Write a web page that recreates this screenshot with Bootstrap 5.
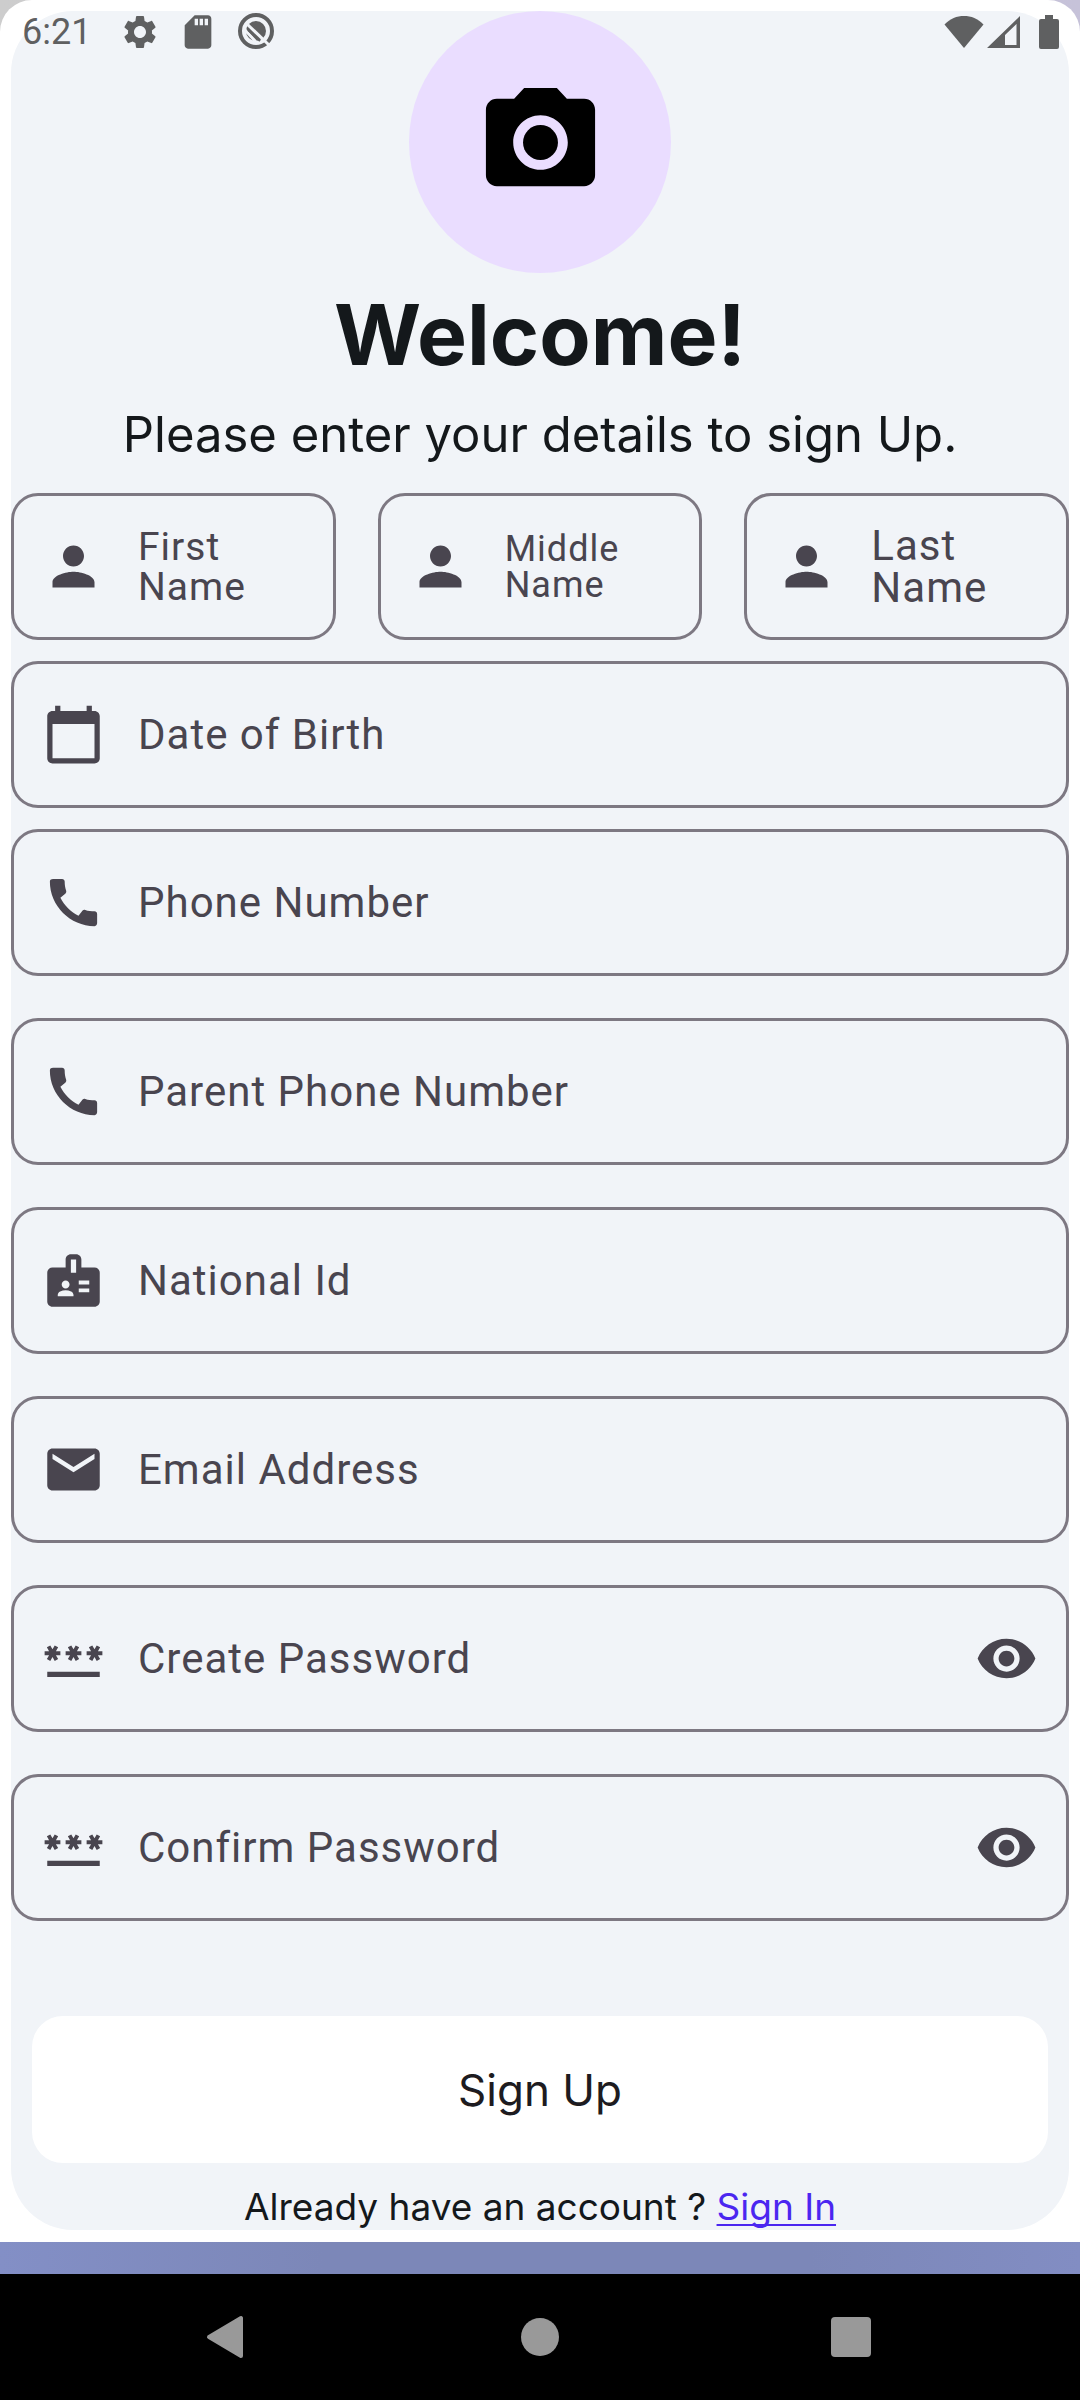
<!DOCTYPE html>
<html lang="en">
<head>
<meta charset="utf-8">
<meta name="viewport" content="width=device-width, initial-scale=1">
<title>Sign Up</title>
<link href="https://cdn.jsdelivr.net/npm/bootstrap@5.3.0/dist/css/bootstrap.min.css" rel="stylesheet">
<style>
  :root { --ink: #14181b; --muted: #49454f; --outline: #7d7882; --panel: #f1f4f8; }
  body { background: linear-gradient(90deg, #cdcdcd, #c6c2d9); color: var(--ink); font-family: Inter, "Liberation Sans", sans-serif; }
  svg { display: block; fill: currentColor; flex: none; }

  .status-strip { height: 64px; padding: 0 21px 0 22px; color: #5f6061; font: 36px/42px Roboto, sans-serif; pointer-events: none; }
  .status-left { gap: 18px; }
  .status-left time { margin-right: 11px; }
  .signal { margin-left: 3px; }
  .battery { margin-left: 19px; }

  .sheet { background: #fff; padding: 11px; border-radius: 32px 32px 0 0; }
  .panel { background: var(--panel); border-radius: 62px; }
  .avatar { width: 262px; height: 262px; background: #eaddff; color: #000; }
  .title { margin: 8px 0 14px; font-size: 84px; line-height: 108px; font-weight: 700; }
  .subtitle { margin: 0 0 26px; font-size: 49px; line-height: 64px; }

  .stack { gap: 42px; }
  .stack-tight { gap: 21px; }
  .name-row { gap: 42px; }
  .field { height: 147px; border: 3px solid var(--outline); border-radius: 27px; padding: 0 28px; gap: 33px; color: var(--muted); font-family: Roboto, sans-serif; }
  .field:focus-within { border-color: #4b39ef; }
  .slot { display: grid; align-items: center; height: 100%; }
  .slot > * { grid-area: 1 / 1; min-width: 0; }
  .slot input { height: 100%; width: 100%; border: 0; outline: 0; background: transparent; color: inherit; font-size: 42px; }
  .slot label { pointer-events: none; font-size: 42px; line-height: 42px; letter-spacing: 1px; }
  .slot label.fit-md { font-size: 39px; line-height: 40px; }
  .slot label.fit-sm { font-size: 36px; line-height: 36px; }
  .slot input:not(:placeholder-shown) + label { opacity: 0; }

  .submit { margin: 95px 21px 21px; height: 147px; border: 0; border-radius: 31px; background: #fff; color: #1d1b20; font-size: 44px; }
  .switch-line { font-size: 37px; line-height: 46px; }
  .switch-line a { color: #4b26f0; text-decoration-skip-ink: none; text-decoration-thickness: 2px; text-underline-offset: 4px; }

  .backdrop { height: 32px; background: linear-gradient(90deg, #838fc6, #7c87b8 30%, #7c87b8 75%, #828dc3); }
  .system-nav { background: #000; gap: 256px; height: 126px; }
  .system-nav button { color: #999; }
</style>
</head>
<body>
<svg class="d-none" aria-hidden="true">
  <symbol id="person" viewBox="0 0 24 24"><path d="M12 12c2.21 0 4-1.79 4-4s-1.79-4-4-4-4 1.79-4 4 1.790 4 4 4zm0 2c-2.670 0-8 1.340-8 4v2h16v-2c0-2.660-5.330-4-8-4z"/></symbol>
  <symbol id="phone" viewBox="0 0 24 24"><path d="M20.010 15.380c-1.230 0-2.420-.2-3.530-.56-.35-.12-.74-.03-1.010.24l-1.570 1.970c-2.830-1.350-5.480-3.900-6.890-6.830l1.950-1.660c.27-.28.35-.67.24-1.020-.37-1.110-.56-2.300-.56-3.530 0-.54-.45-.99-.99-.99H4.190C3.650 3 3 3.240 3 3.990 3 13.280 10.730 21 20.010 21c.71 0 .99-.63.99-1.180v-3.450c0-.54-.45-.99-.99-.99z"/></symbol>
  <symbol id="password" viewBox="0 0 24 24"><path d="M2 17h20v2H2v-2zm1.150-4.050L4 11.470l.85 1.480 1.300-.75-.85-1.480H7v-1.500H5.300l.85-1.470L4.850 7 4 8.470 3.150 7l-1.300.75.85 1.470H1v1.500h1.700l-.85 1.480 1.300.75zm6.700-.75l1.300.75.85-1.480.85 1.480 1.300-.75-.85-1.480H15v-1.500h-1.700l.85-1.470-1.300-.75L12 8.470 11.150 7l-1.300.75.85 1.470H9v1.500h1.700l-.85 1.480zM23 9.220h-1.700l.85-1.470-1.300-.75L20 8.470 19.150 7l-1.300.75.85 1.470H17v1.500h1.700l-.85 1.480 1.300.75.850-1.480.85 1.480 1.300-.75-.85-1.480H23v-1.500z"/></symbol>
  <symbol id="eye" viewBox="0 0 24 24"><path d="M12 4.500C7 4.500 2.730 7.610 1 12c1.730 4.390 6 7.500 11 7.500s9.270-3.110 11-7.500c-1.730-4.390-6-7.500-11-7.500zM12 17c-2.760 0-5-2.240-5-5s2.240-5 5-5 5 2.240 5 5-2.240 5-5 5zm0-8c-1.660 0-3 1.340-3 3s1.340 3 3 3 3-1.340 3-3-1.340-3-3-3z"/></symbol>
</svg>

<div class="position-relative d-flex flex-column min-vh-100">
  <header class="status-strip position-absolute top-0 start-0 end-0 z-1 d-flex align-items-center justify-content-between">
    <div class="status-left d-flex align-items-center">
      <time>6:21</time>
      <svg width="40" height="40" viewBox="0 0 24 24"><path d="M19.140 12.940c.04-.3.060-.61.060-.94 0-.32-.02-.64-.07-.94l2.030-1.580c.18-.14.23-.41.120-.61l-1.920-3.320c-.12-.22-.37-.29-.59-.22l-2.390.96c-.5-.38-1.030-.7-1.620-.94l-.36-2.540c-.04-.24-.24-.41-.48-.41h-3.840c-.24 0-.43.17-.47.41l-.36 2.540c-.59.24-1.130.57-1.620.94l-2.390-.96c-.22-.08-.47 0-.59.22L2.740 8.870c-.12.21-.08.47.12.61l2.030 1.580c-.05.3-.09.63-.09.94s.02.64.070.94l-2.030 1.580c-.18.14-.23.41-.12.61l1.920 3.320c.12.22.37.29.59.22l2.390-.96c.5.38 1.030.7 1.620.94l.36 2.540c.05.24.24.41.48.41h3.840c.24 0 .44-.17.47-.41l.36-2.540c.59-.24 1.130-.56 1.620-.94l2.390.96c.22.08.47 0 .59-.22l1.920-3.320c.12-.22.070-.47-.12-.61l-2.010-1.580zM12 15.600c-1.980 0-3.600-1.620-3.600-3.600s1.620-3.600 3.600-3.600 3.600 1.620 3.600 3.600-1.620 3.600-3.600 3.600z"/></svg>
      <svg width="40" height="40" viewBox="0 0 24 24"><path d="M18 2h-8L4.020 8 4 20c0 1.100.9 2 2 2h12c1.100 0 2-.9 2-2V4c0-1.100-.9-2-2-2zm-6 6h-2V4h2v4zm3 0h-2V4h2v4zm3 0h-2V4h2v4z"/></svg>
      <svg width="40" height="40" viewBox="0 0 40 40"><circle cx="20" cy="19" r="16" fill="none" stroke="currentColor" stroke-width="4"/><circle cx="20" cy="19" r="10"/><path d="M11 12 L33 33" stroke="#f1f4f8" stroke-width="3" fill="none"/><path d="M9 18 L20 30" stroke="#f1f4f8" stroke-width="3"/><path d="M12 18 L24 29" stroke="currentColor" stroke-width="2"/></svg>
    </div>
    <div class="d-flex align-items-center">
      <svg width="40" height="34" viewBox="0 0 40 34"><path d="M20 33 .5 9.500C6 3.500 13 1 20 1s14 2.500 19.500 8.500z"/></svg>
      <svg class="signal" width="33" height="34" viewBox="0 0 33 34"><path fill-rule="evenodd" d="M0 33 33 1v32zM18 30h11.500V9L18 20z"/></svg>
      <svg class="battery" width="20" height="34" viewBox="0 0 20 34"><path d="M6 0h8v4h4a2 2 0 0 1 2 2v26a2 2 0 0 1-2 2H2a2 2 0 0 1-2-2V6a2 2 0 0 1 2-2h4z"/></svg>
    </div>
  </header>

  <main class="sheet flex-grow-1">
    <form class="panel d-flex flex-column">
      <button type="button" class="avatar btn rounded-circle border-0 p-0 mx-auto d-flex align-items-center justify-content-center" aria-label="Add photo">
        <svg width="131" height="131" viewBox="0 0 24 24"><circle cx="12" cy="12" r="3.200"/><path d="M9 2 7.170 4H4c-1.100 0-2 .9-2 2v12c0 1.100.9 2 2 2h16c1.100 0 2-.9 2-2V6c0-1.100-.9-2-2-2h-3.170L15 2H9zm3 15c-2.760 0-5-2.240-5-5s2.240-5 5-5 5 2.240 5 5-2.240 5-5 5z"/></svg>
      </button>
      <h1 class="title text-center">Welcome!</h1>
      <p class="subtitle text-center">Please enter your details to sign Up.</p>

      <div class="stack d-flex flex-column">
        <div class="stack-tight d-flex flex-column">
          <div class="name-row row row-cols-3 flex-nowrap g-0">
            <div class="field col flex-fill d-flex align-items-center">
              <svg width="63" height="63"><use href="#person"/></svg>
              <div class="slot flex-grow-1"><input id="first" type="text" placeholder=" "><label class="fit-md" for="first">First<br>Name</label></div>
            </div>
            <div class="field col flex-fill d-flex align-items-center">
              <svg width="63" height="63"><use href="#person"/></svg>
              <div class="slot flex-grow-1"><input id="middle" type="text" placeholder=" "><label class="fit-sm" for="middle">Middle<br>Name</label></div>
            </div>
            <div class="field col flex-fill d-flex align-items-center">
              <svg width="63" height="63"><use href="#person"/></svg>
              <div class="slot flex-grow-1"><input id="last" type="text" placeholder=" "><label for="last">Last<br>Name</label></div>
            </div>
          </div>
          <div class="field d-flex align-items-center">
            <svg width="63" height="63" viewBox="0 0 24 24"><path d="M20 3h-1V1h-2v2H7V1H5v2H4c-1.100 0-2 .9-2 2v16c0 1.100.9 2 2 2h16c1.100 0 2-.9 2-2V5c0-1.100-.9-2-2-2zm0 18H4V8h16v13z"/></svg>
            <div class="slot flex-grow-1"><input id="dob" type="text" placeholder=" "><label for="dob">Date of Birth</label></div>
          </div>
          <div class="field d-flex align-items-center">
            <svg width="63" height="63"><use href="#phone"/></svg>
            <div class="slot flex-grow-1"><input id="phone-no" type="tel" placeholder=" "><label for="phone-no">Phone Number</label></div>
          </div>
        </div>
        <div class="field d-flex align-items-center">
          <svg width="63" height="63"><use href="#phone"/></svg>
          <div class="slot flex-grow-1"><input id="parent-no" type="tel" placeholder=" "><label for="parent-no">Parent Phone Number</label></div>
        </div>
        <div class="field d-flex align-items-center">
          <svg width="63" height="63" viewBox="0 0 24 24"><path d="M20 7h-5V4c0-1.100-.9-2-2-2h-2c-1.100 0-2 .9-2 2v3H4c-1.100 0-2 .9-2 2v11c0 1.100.9 2 2 2h16c1.100 0 2-.9 2-2V9c0-1.100-.9-2-2-2zM9 12c.83 0 1.500.67 1.500 1.500S9.830 15 9 15s-1.500-.67-1.500-1.500S8.170 12 9 12zm3 6H6v-.43c0-.6.36-1.150.92-1.390.65-.28 1.340-.43 2.080-.43s1.430.15 2.080.43c.55.24.92.78.92 1.390V18zm1-9h-2V4h2v5zm5 7.500h-4V15h4v1.500zm0-3h-4V12h4v1.500z"/></svg>
          <div class="slot flex-grow-1"><input id="national" type="text" placeholder=" "><label for="national">National Id</label></div>
        </div>
        <div class="field d-flex align-items-center">
          <svg width="63" height="63" viewBox="0 0 24 24"><path d="M20 4H4c-1.100 0-1.990.9-1.990 2L2 18c0 1.100.9 2 2 2h16c1.100 0 2-.9 2-2V6c0-1.100-.9-2-2-2zm0 4-8 5-8-5V6l8 5 8-5v2z"/></svg>
          <div class="slot flex-grow-1"><input id="email" type="email" placeholder=" "><label for="email">Email Address</label></div>
        </div>
        <div class="field d-flex align-items-center">
          <svg width="63" height="63"><use href="#password"/></svg>
          <div class="slot flex-grow-1"><input id="create" type="password" placeholder=" "><label for="create">Create Password</label></div>
          <button type="button" class="btn border-0 p-0 text-reset" aria-label="Show password"><svg width="63" height="63"><use href="#eye"/></svg></button>
        </div>
        <div class="field d-flex align-items-center">
          <svg width="63" height="63"><use href="#password"/></svg>
          <div class="slot flex-grow-1"><input id="confirm" type="password" placeholder=" "><label for="confirm">Confirm Password</label></div>
          <button type="button" class="btn border-0 p-0 text-reset" aria-label="Show confirmation"><svg width="63" height="63"><use href="#eye"/></svg></button>
        </div>
      </div>

      <button type="submit" class="submit btn">Sign Up</button>
      <p class="switch-line text-center mb-0">Already have an account ? <a href="#signin">Sign In</a></p>
    </form>
  </main>

  <div class="backdrop"></div>
  <nav class="system-nav d-flex align-items-center justify-content-center" aria-label="System">
    <button type="button" class="btn border-0 p-0" aria-label="Back"><svg width="56" height="56" viewBox="0 0 56 56"><path d="M9 28 41 9v38z" stroke="currentColor" stroke-width="4" stroke-linejoin="round"/></svg></button>
    <button type="button" class="btn border-0 p-0" aria-label="Home"><svg width="56" height="56" viewBox="0 0 56 56"><circle cx="28" cy="28" r="19"/></svg></button>
    <button type="button" class="btn border-0 p-0" aria-label="Recent apps"><svg width="56" height="56" viewBox="0 0 56 56"><rect x="7" y="8" width="40" height="40" rx="4"/></svg></button>
  </nav>
</div>
<script src="https://cdn.jsdelivr.net/npm/bootstrap@5.3.0/dist/js/bootstrap.bundle.min.js"></script>
</body>
</html>
